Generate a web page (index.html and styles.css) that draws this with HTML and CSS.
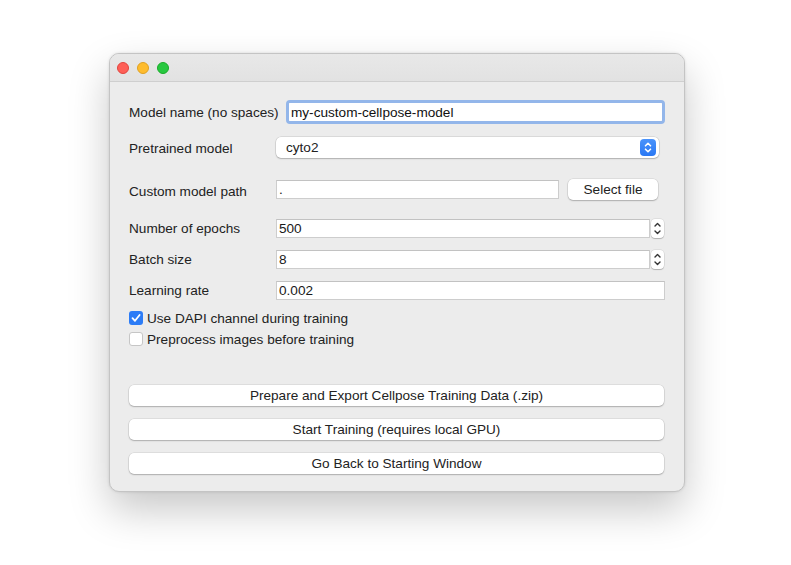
FILE: index.html
```html
<!DOCTYPE html>
<html>
<head>
<meta charset="utf-8">
<link rel="stylesheet" href="styles.css">
</head>
<body>
<div class="window">
  <div class="titlebar">
    <span class="light red"></span>
    <span class="light yellow"></span>
    <span class="light green"></span>
  </div>
  <div class="content">
    <div class="row r1">
      <span class="label">Model name (no spaces)</span>
      <div class="focus-ring"><div class="field">my-custom-cellpose-model</div></div>
    </div>
    <div class="row r2">
      <span class="label">Pretrained model</span>
      <div class="combo">
        <span class="combo-text">cyto2</span>
        <span class="combo-btn">
          <svg width="10" height="13" viewBox="0 0 10 13"><path d="M2.5 4.8 L5 2.3 L7.5 4.8 M2.5 8.2 L5 10.7 L7.5 8.2" fill="none" stroke="#fff" stroke-width="1.6" stroke-linecap="round" stroke-linejoin="round"/></svg>
        </span>
      </div>
    </div>
    <div class="row r3">
      <span class="label">Custom model path</span>
      <div class="field path">.</div>
      <button class="btn select">Select file</button>
    </div>
    <div class="row r4">
      <span class="label">Number of epochs</span>
      <div class="field num">500</div>
      <div class="spinner">
        <svg width="13" height="19" viewBox="0 0 13 19"><path d="M4 7 L6.5 4.5 L9 7 M4 12 L6.5 14.5 L9 12" fill="none" stroke="#333" stroke-width="1.4" stroke-linecap="round" stroke-linejoin="round"/></svg>
      </div>
    </div>
    <div class="row r5">
      <span class="label">Batch size</span>
      <div class="field num">8</div>
      <div class="spinner">
        <svg width="13" height="19" viewBox="0 0 13 19"><path d="M4 7 L6.5 4.5 L9 7 M4 12 L6.5 14.5 L9 12" fill="none" stroke="#333" stroke-width="1.4" stroke-linecap="round" stroke-linejoin="round"/></svg>
      </div>
    </div>
    <div class="row r6">
      <span class="label">Learning rate</span>
      <div class="field lr">0.002</div>
    </div>
    <div class="check c1">
      <span class="box checked">
        <svg width="14" height="14" viewBox="0 0 14 14"><path d="M3.5 7.2 L6 9.8 L10.6 4" fill="none" stroke="#fff" stroke-width="1.8" stroke-linecap="round" stroke-linejoin="round"/></svg>
      </span>
      <span class="check-label">Use DAPI channel during training</span>
    </div>
    <div class="check c2">
      <span class="box"></span>
      <span class="check-label">Preprocess images before training</span>
    </div>
    <button class="btn wide b1">Prepare and Export Cellpose Training Data (.zip)</button>
    <button class="btn wide b2">Start Training (requires local GPU)</button>
    <button class="btn wide b3">Go Back to Starting Window</button>
  </div>
</div>
</body>
</html>
```

FILE: styles.css
```css
html, body {
  margin: 0;
  padding: 0;
  background: #ffffff;
}
body {
  box-sizing: border-box;
  min-height: 565px;
  padding: 53px 0 0 109px;
  font-family: "Liberation Sans", Arial, sans-serif;
  font-size: 13.6px;
  color: #222;
}
.window {
  width: 576px;
  height: 439px;
  box-sizing: border-box;
  border-radius: 10px;
  background: #ececec;
  border: 1px solid #c4c4c4;
  box-shadow: 0 18px 40px rgba(0,0,0,0.22), 0 0 3px rgba(0,0,0,0.12);
  overflow: hidden;
  display: flex;
  flex-direction: column;
}
.titlebar {
  height: 27px;
  flex: none;
  background: linear-gradient(#e8e8e8, #e2e2e2);
  border-bottom: 1px solid #cfcfcf;
  display: flex;
  align-items: center;
  padding-left: 7px;
  gap: 8px;
}
.light {
  width: 12px;
  height: 12px;
  border-radius: 50%;
  box-sizing: border-box;
}
.red { background: #fe5f57; border: 0.5px solid #e0443e; }
.yellow { background: #febc2e; border: 0.5px solid #dea123; }
.green { background: #28c840; border: 0.5px solid #1aab29; }

.content {
  display: flex;
  flex-direction: column;
  padding: 0 19px 0 19px;
}
.row {
  display: flex;
  align-items: center;
}
.label {
  flex: none;
  width: 147px;
  color: #222;
}
.r1 { margin-top: 18px; height: 24px; }
.r2 { margin-top: 13px; height: 21px; }
.r3 { margin-top: 21px; height: 21px; }
.r4 { margin-top: 19px; height: 19px; }
.r5 { margin-top: 12px; height: 19px; }
.r6 { margin-top: 12px; height: 19px; }

.r2 .label { padding-top: 1px; }
.r3 .label { padding-top: 3px; }

.r1 .label { width: 157px; }
.focus-ring {
  flex: none;
  width: 379px;
  height: 24px;
  box-sizing: border-box;
  border: 3px solid #93b6ea;
  border-radius: 4px;
  display: flex;
}
.focus-ring .field {
  flex: 1;
  height: auto;
  border: none;
  border-radius: 1px;
  padding-left: 2px;
  color: #111;
}
.field {
  flex: none;
  box-sizing: border-box;
  height: 19px;
  background: #fff;
  border: 1px solid #cdcdcd;
  border-top-color: #c2c2c2;
  display: flex;
  align-items: center;
  padding-left: 2px;
  color: #1a1a1a;
}
.path { width: 283px; }
.num { width: 374px; }
.lr { width: 389px; }

.combo {
  flex: none;
  width: 383px;
  height: 21px;
  box-sizing: border-box;
  background: #fff;
  border-radius: 5px;
  box-shadow: 0 0 0 0.5px rgba(0,0,0,0.15), 0 1px 1.5px rgba(0,0,0,0.2);
  display: flex;
  align-items: center;
  justify-content: space-between;
  padding: 0 3px 0 10px;
}
.combo-btn {
  width: 16px;
  height: 17px;
  border-radius: 4px;
  background: linear-gradient(#4a93fb, #2a78f4);
  display: flex;
  align-items: center;
  justify-content: center;
}

.btn {
  font-family: "Liberation Sans", Arial, sans-serif;
  font-size: 13.6px;
  color: #222;
  background: #fff;
  border: none;
  border-radius: 5px;
  box-shadow: 0 0 0 0.5px rgba(0,0,0,0.12), 0 1px 1.5px rgba(0,0,0,0.22);
  padding: 0;
  height: 21px;
  margin: 0;
}
.select {
  flex: none;
  width: 90px;
  margin-left: 9px;
}
.spinner {
  flex: none;
  width: 13px;
  height: 19px;
  margin-left: 1px;
  border-radius: 4px;
  background: #fff;
  box-shadow: 0 0 0 0.5px rgba(0,0,0,0.12), 0 1px 1px rgba(0,0,0,0.2);
  display: flex;
}

.check {
  display: flex;
  align-items: center;
  height: 14px;
  gap: 4px;
}
.c1 { margin-top: 11px; }
.c2 { margin-top: 7px; }
.box {
  flex: none;
  width: 14px;
  height: 14px;
  box-sizing: border-box;
  border-radius: 3px;
  background: #fff;
  border: 1px solid #c6c6c6;
  display: flex;
}
.box.checked {
  background: #2c7cf6;
  border: none;
}
.check-label { color: #222; }

.wide {
  width: 535px;
}
.b1 { margin-top: 39px; }
.b2 { margin-top: 13px; }
.b3 { margin-top: 13px; }
```
